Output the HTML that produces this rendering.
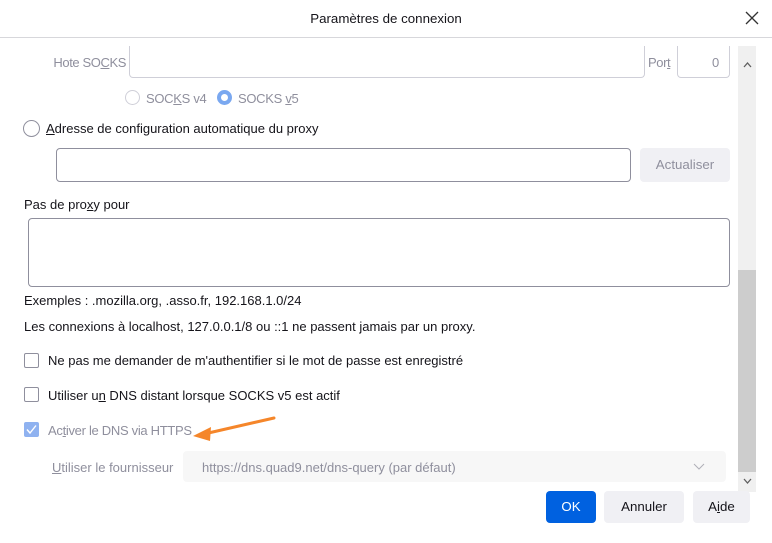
<!DOCTYPE html>
<html><head><meta charset="utf-8"><style>
*{box-sizing:border-box;margin:0;padding:0}
body{width:772px;height:543px;background:#fff;font-family:"Liberation Sans",sans-serif;font-size:13px;color:#15141a;position:relative;overflow:hidden}
.a{position:absolute;white-space:nowrap}
.g{color:#8f8f9d}
.box{position:absolute;border:1px solid #cfcfd8;border-radius:4px;background:#fff}
.cb{position:absolute;width:15px;height:15px;border:1px solid #8f8f9d;border-radius:2px;background:#fff}
.btn{position:absolute;border-radius:4px;background:#f0f0f4;text-align:center;font-size:13.3px}
</style></head><body>
<div class="a" style="left:0;top:0;width:772px;height:38px;border-bottom:1px solid #d7d7db"></div>
<div class="a" style="left:0;top:11px;width:772px;text-align:center;font-size:13.3px">Paramètres de connexion</div>
<svg class="a" style="left:745px;top:11px" width="14" height="14"><path d="M1 1L13 13M13 1L1 13" stroke="#333" stroke-width="1.3"/></svg>

<div class="a g" style="right:646px;top:55px;letter-spacing:-0.4px">Hote SO<u>C</u>KS</div>
<div class="box" style="left:129px;top:46px;width:516px;height:32px;border-top:none;border-radius:0 0 4px 4px"></div>
<div class="a g" style="left:648px;top:55px;letter-spacing:-0.4px">Por<u>t</u></div>
<div class="box" style="left:677px;top:46px;width:53px;height:32px;border-top:none;border-radius:0 0 4px 4px"></div>
<div class="a g" style="left:712px;top:55px">0</div>

<div class="a" style="left:125px;top:90px;width:15px;height:15px;border:1px solid #cfcfd8;border-radius:50%"></div>
<div class="a g" style="left:146px;top:91px;letter-spacing:-0.3px">SOC<u>K</u>S v4</div>
<div class="a" style="left:217px;top:90px;width:15px;height:15px;border:4px solid #7aa8f0;border-radius:50%"></div>
<div class="a g" style="left:238px;top:91px;letter-spacing:-0.3px">SOCKS <u>v</u>5</div>

<div class="a" style="left:23px;top:120px;width:17px;height:17px;border:1px solid #8f8f9d;border-radius:50%"></div>
<div class="a" style="left:46px;top:121px"><u>A</u>dresse de configuration automatique du proxy</div>
<div class="box" style="left:56px;top:148px;width:575px;height:34px;border-color:#8f8f9d"></div>
<div class="btn g" style="left:640px;top:148px;width:90px;height:34px;line-height:34px">Actualiser</div>

<div class="a" style="left:24px;top:197px">Pas de pro<u>x</u>y pour</div>
<div class="box" style="left:28px;top:218px;width:702px;height:69px;border-color:#8f8f9d"></div>
<div class="a" style="left:24px;top:293px">Exemples : .mozilla.org, .asso.fr, 192.168.1.0/24</div>
<div class="a" style="left:24px;top:319px">Les connexions à localhost, 127.0.0.1/8 ou ::1 ne passent jamais par un proxy.</div>

<div class="cb" style="left:24px;top:353px"></div>
<div class="a" style="left:48px;top:353px">Ne pas me demander de m'authentifier si le mot de passe est enre<u>g</u>istré</div>
<div class="cb" style="left:24px;top:387px"></div>
<div class="a" style="left:48px;top:388px">Utiliser u<u>n</u> DNS distant lorsque SOCKS v5 est actif</div>
<div class="a" style="left:24px;top:422px;width:15px;height:15px;background:#8fb2f0;border-radius:2px"></div>
<svg class="a" style="left:24px;top:422px" width="15" height="15"><path d="M3 7.5L6 11L12 3.5" stroke="#fff" stroke-width="1.4" fill="none"/></svg>
<div class="a g" style="left:48px;top:423px;letter-spacing:-0.3px">Ac<u>t</u>iver le DNS via HTTPS</div>
<svg class="a" style="left:190px;top:415px" width="90" height="26"><path d="M84 3L14 19" stroke="#f5862a" stroke-width="3" stroke-linecap="round"/><path d="M3 21L21 12L20 26Z" fill="#f5862a"/></svg>

<div class="a g" style="left:52px;top:460px"><u>U</u>tiliser le fournisseur</div>
<div class="a" style="left:183px;top:451px;width:543px;height:31px;background:#f7f7f7;border-radius:4px"></div>
<div class="a g" style="left:202px;top:460px">https://dns.quad9.net/dns-query (par défaut)</div>
<svg class="a" style="left:693px;top:463px" width="12" height="8"><path d="M1 1L6 6L11 1" stroke="#b0b0b8" fill="none"/></svg>

<div class="a" style="left:738px;top:46px;width:18px;height:446px;background:#f0f0f0"></div>
<div class="a" style="left:738px;top:270px;width:18px;height:202px;background:#cdcdcd"></div>
<svg class="a" style="left:743px;top:62px" width="9" height="7"><path d="M1 5L4.5 1L8 5" stroke="#606060" stroke-width="1.3" fill="none"/></svg>
<svg class="a" style="left:743px;top:478px" width="9" height="7"><path d="M1 1L4.5 5L8 1" stroke="#606060" stroke-width="1.3" fill="none"/></svg>

<div class="btn" style="left:546px;top:491px;width:50px;height:32px;line-height:32px;background:#0061e0;color:#fff">OK</div>
<div class="btn" style="left:604px;top:491px;width:80px;height:32px;line-height:32px">Annuler</div>
<div class="btn" style="left:693px;top:491px;width:57px;height:32px;line-height:32px">A<u>i</u>de</div>
</body></html>
